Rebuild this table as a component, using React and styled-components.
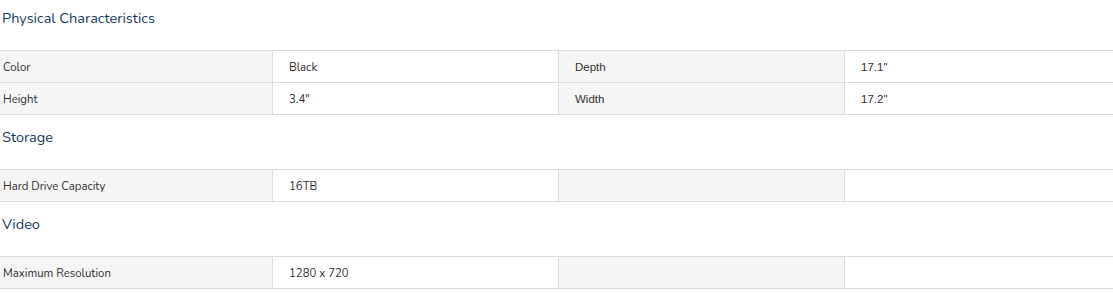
import React from 'react';
import styled, { createGlobalStyle } from 'styled-components';

const Global = createGlobalStyle`
  body {
    margin: 0;
    background: #fff;
    font-family: "Nunito", "Noto Sans", "Open Sans", sans-serif;
    overflow: hidden;
  }
`;

const Page = styled.div`
  width: 1130px;
`;

const Section = styled.section`
  display: flex;
  flex-direction: column;
`;

const Heading = styled.h3`
  margin: 0;
  height: ${(p) => (p.first ? '50px' : '54px')};
  padding-top: ${(p) => (p.first ? '9px' : '13px')};
  box-sizing: border-box;
  padding-left: 2px;
  font-size: 14.5px;
  font-weight: 400;
  color: #173a62;
  line-height: 18px;
`;

const Table = styled.div`
  display: grid;
  grid-template-columns: 273px 286px 286px 1fr;
  border-top: 1px solid #dddddd;
`;

const Cell = styled.div`
  height: 31px;
  display: flex;
  align-items: center;
  border-bottom: 1px solid #dddddd;
  border-right: ${(p) => (p.last ? 'none' : '1px solid #dddddd')};
  background: ${(p) => (p.label ? '#f5f5f5' : '#ffffff')};
  padding-left: ${(p) => (p.edge ? '3px' : '16px')};
  font-size: ${(p) => (p.alt ? '11.5px' : '11.4px')};
  color: #333333;
  font-family: ${(p) =>
    p.alt ? '"Liberation Sans", Arial, sans-serif' : '"Nunito", "Noto Sans", sans-serif'};
`;

const sections = [
  {
    title: 'Physical Characteristics',
    rows: [
      ['Color', 'Black', 'Depth', '17.1"'],
      ['Height', '3.4"', 'Width', '17.2"'],
    ],
  },
  { title: 'Storage', rows: [['Hard Drive Capacity', '16TB', '', '']] },
  { title: 'Video', rows: [['Maximum Resolution', '1280 x 720', '', '']] },
];

export default function App() {
  return (
    <Page>
      <Global />
      {sections.map((s, i) => (
        <Section key={s.title}>
          <Heading first={i === 0}>{s.title}</Heading>
          <Table>
            {s.rows.map((r) => (
              <React.Fragment key={r[0]}>
                <Cell label edge>{r[0]}</Cell>
                <Cell>{r[1]}</Cell>
                <Cell label alt>{r[2]}</Cell>
                <Cell alt last>{r[3]}</Cell>
              </React.Fragment>
            ))}
          </Table>
        </Section>
      ))}
    </Page>
  );
}
